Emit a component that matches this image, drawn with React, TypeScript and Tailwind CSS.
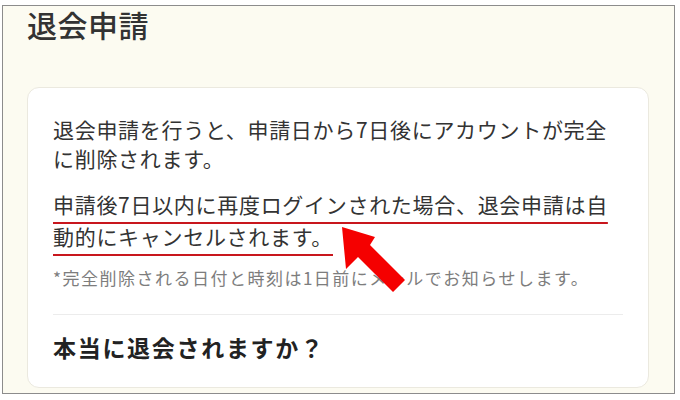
const jp = "font-['Noto_Sans_CJK_JP','Noto_Sans',sans-serif]"

const Arrow = () => (
  <svg
    className="absolute left-[302px] top-[132px] h-[80px] w-[90px]"
    viewBox="0 0 90 80"
  >
    <polygon
      points="12,7 45,17 40,25 75,60 63,72 28,37 16,49"
      fill="#f50000"
    />
  </svg>
)

export default function App() {
  return (
    <div className={`${jp} min-h-[400px] w-[680px] bg-white pl-[2px] pt-[5px]`}>
      <div className="h-[389px] w-[673px] overflow-hidden border border-[#8c8c8c] bg-[#fcfbf1] px-[24px]">
        <h1 className="pt-[1px] text-[30px] leading-[34px] font-medium tracking-[0.5px] text-[#333]">
          退会申請
        </h1>
        <div className="relative mt-[46px] h-[301px] w-[622px] rounded-[12px] border border-[#ebe9df] bg-white px-[25px] pt-[27px]">
          <p className="text-[21px] leading-[28.5px] tracking-[0.7px] whitespace-nowrap text-[#333]">
            退会申請を行うと、申請日から7日後にアカウントが完全
            <br />
            に削除されます。
          </p>
          <p className="mt-[16px] text-[21px] leading-[32px] tracking-[0.7px] whitespace-nowrap text-[#333]">
            <span className="underline decoration-[#c8161d] decoration-2 underline-offset-[9px]">
              申請後7日以内に再度ログインされた場合、退会申請は自
            </span>
            <br />
            <span className="underline decoration-[#c8161d] decoration-2 underline-offset-[9px]">
              動的にキャンセルされます。
            </span>
          </p>
          <p className="mt-[14px] text-[17px] leading-[24px] tracking-[1.5px] whitespace-nowrap text-[#7d7d7d]">
            *完全削除される日付と時刻は1日前にメールでお知らせします。
          </p>
          <div className="mt-[24px] h-px bg-[#ececec]" />
          <p className="mt-[16px] text-[23px] leading-[32px] font-bold tracking-[1.7px] text-[#222]">
            本当に退会されますか？
          </p>
          <Arrow />
        </div>
      </div>
    </div>
  )
}
